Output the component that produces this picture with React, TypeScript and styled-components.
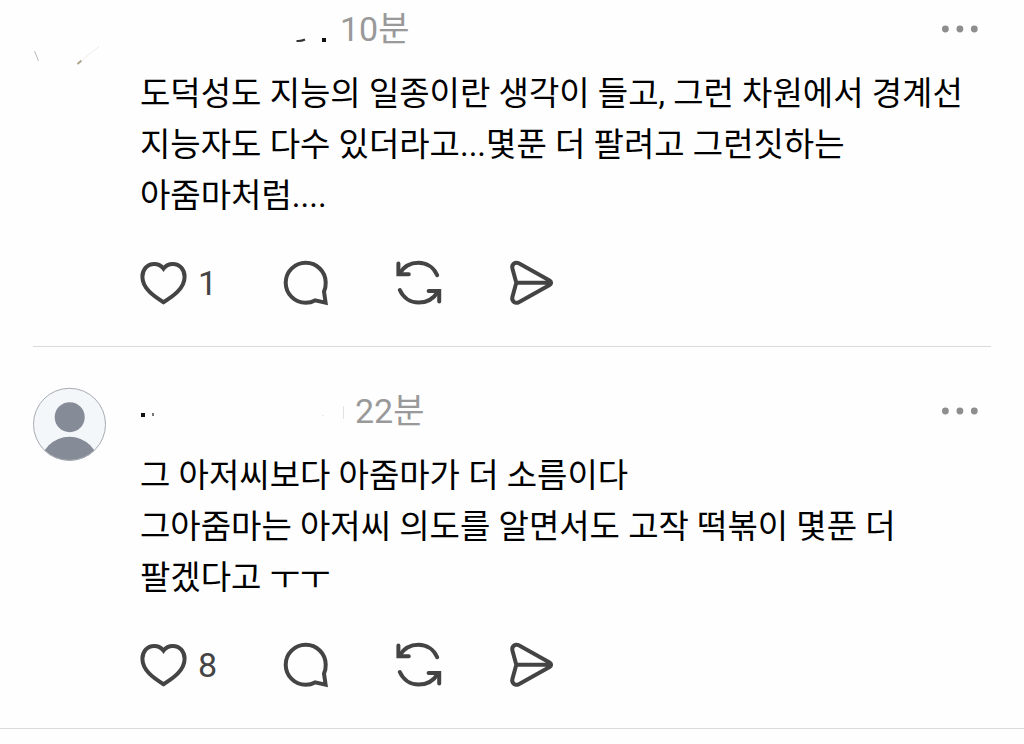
import React from "react";
import styled, { createGlobalStyle } from "styled-components";

const GlobalStyle = createGlobalStyle`
  * { box-sizing: border-box; }
  body {
    margin: 0;
    background: #fefefe;
    color: #000000;
    font-family: Roboto, "Noto Sans CJK KR", sans-serif;
  }
`;

const Feed = styled.main`
  width: 100%;
`;

const Post = styled.article<{ $first?: boolean }>`
  display: flex;
  gap: 33px;
  margin: 0 33px;
  padding: ${(p) => (p.$first ? 5 : 40)}px 0 39px;
`;

const Divider = styled.hr<{ $inset?: boolean }>`
  height: 1px;
  margin: ${(p) => (p.$inset ? "0 33px" : "0")};
  border: 0;
  background: #dadada;
`;

const Avatar = styled.svg`
  flex: none;
  width: 74px;
  height: 75px;
`;

const Content = styled.div`
  flex: 1;
  min-width: 0;
`;

const Header = styled.header`
  display: flex;
  align-items: center;
  gap: 6px;
  height: 48px;
`;

const Name = styled.svg<{ $width: number }>`
  flex: none;
  width: ${(p) => p.$width}px;
  height: 48px;
`;

const Time = styled.time`
  color: #999999;
  font-size: 34px;
  line-height: 48px;
`;

const IconButton = styled.button<{ $width?: number }>`
  display: flex;
  align-items: center;
  gap: 10px;
  width: ${(p) => (p.$width ? `${p.$width}px` : "auto")};
  padding: 0;
  border: 0;
  background: none;
  color: #444444;
  font: inherit;
  font-size: 34px;
  line-height: 48px;
  cursor: pointer;
`;

const MoreButton = styled(IconButton)`
  margin-left: auto;
  margin-right: 12px;
  color: #8e8e8e;
`;

const Body = styled.p`
  margin: 15px 0 38px;
  font-size: 33px;
  line-height: 51px;
  word-break: keep-all;
  white-space: pre-line;
`;

const Actions = styled.div`
  display: flex;
`;

const Glyph = styled.svg`
  flex: none;
  width: 48px;
  height: 48px;
  fill: none;
  stroke: currentColor;
  stroke-width: 4;
  stroke-linejoin: round;
  stroke-linecap: round;
`;

const HeartIcon = () => (
  <Glyph viewBox="0 0 48 48" aria-hidden="true">
    <path
      strokeLinejoin="miter"
      d="M23.5 9.6C21.2 6.6 18 5 14.2 5C7.2 5 2.4 10.6 2.4 17.8C2.4 29.5 14 37.4 23.5 43.2C33 37.4 44.6 29.5 44.6 17.8C44.6 10.6 39.8 5 32.8 5C29 5 25.8 6.6 23.5 9.6Z"
    />
  </Glyph>
);

const CommentIcon = () => (
  <Glyph viewBox="0 0 48 48" aria-hidden="true">
    <path
      strokeLinejoin="miter"
      d="M42 32.6C43.3 29.8 43.8 26.8 43.7 23.6A20 20 0 1 0 23.7 43.7C27.2 43.7 30.3 42.9 33 41.4L43.6 43.6Z"
    />
  </Glyph>
);

const RepostIcon = () => (
  <Glyph viewBox="0 0 48 48" aria-hidden="true">
    <path d="M4.4 14.6C8.6 7.8 15.6 3.8 23.4 3.8C31.8 3.8 38.8 8.6 42.2 16.2M4.8 31C8.2 38.6 15.2 43.6 23.6 43.6C31.6 43.6 38.8 39.4 43 32.6" />
    <path strokeLinejoin="miter" d="M3.4 4.6V15.2H13.8M33.6 32H44.2V42.6" />
  </Glyph>
);

const SendIcon = () => (
  <Glyph viewBox="0 0 48 48" aria-hidden="true">
    <path d="M4.4 9.4C3.4 5.4 7.2 2.4 10.8 4.3L41.6 21.4C43.6 22.6 43.6 24.9 41.6 26.1L10.8 43.2C7.2 45.1 3.4 42.1 4.4 38.1L8.3 23.75ZM8.3 23.75H42" />
  </Glyph>
);

const MoreIcon = () => (
  <svg width="38" height="8" viewBox="0 0 38 8" fill="currentColor" aria-hidden="true">
    <circle cx="4.4" cy="4" r="3.4" />
    <circle cx="18.9" cy="4" r="3.4" />
    <circle cx="33.3" cy="4" r="3.4" />
  </svg>
);

interface PostData {
  id: string;
  avatar: React.ReactNode;
  nameWidth: number;
  name: React.ReactNode;
  time: string;
  text: string;
  likes: number;
}

const posts: PostData[] = [
  {
    id: "first",
    avatar: (
      <>
        <path d="M1.5 46L5.5 56" stroke="#b9b9b9" />
        <path d="M44.5 59L48.5 55.5" stroke="#aaa68f" strokeWidth="2" />
        <path d="M48.5 55.5L66 41.5" stroke="#efebe8" />
      </>
    ),
    nameWidth: 194,
    name: (
      <>
        <path d="M156.5 36Q161 36.5 165 34.5" fill="none" stroke="#333333" strokeWidth="2" />
        <rect x="182" y="33" width="4" height="4" fill="#111111" />
      </>
    ),
    time: "10분",
    text: "도덕성도 지능의 일종이란 생각이 들고, 그런 차원에서 경계선 지능자도 다수 있더라고...몇푼 더 팔려고 그런짓하는 아줌마처럼....",
    likes: 1,
  },
  {
    id: "second",
    avatar: (
      <>
        <defs>
          <clipPath id="avatar-disc">
            <circle cx="36.5" cy="37.3" r="36.5" />
          </clipPath>
        </defs>
        <circle cx="36.5" cy="37.3" r="36.5" fill="#f3f7fa" />
        <g clipPath="url(#avatar-disc)" fill="#868b98">
          <circle cx="36.7" cy="30.2" r="15" />
          <circle cx="36.5" cy="79" r="29.3" />
        </g>
        <circle cx="36.5" cy="37.3" r="36" fill="none" stroke="#a9adb3" />
      </>
    ),
    nameWidth: 209,
    name: (
      <>
        <rect x="1" y="26" width="4" height="4" fill="#111111" />
        <rect x="12" y="26" width="2" height="3" fill="#777777" />
        <rect x="182" y="28" width="2" height="1" fill="#ececec" />
        <rect x="203" y="19" width="1" height="13" fill="#e2e2e2" />
      </>
    ),
    time: "22분",
    text: "그 아저씨보다 아줌마가 더 소름이다\n그아줌마는 아저씨 의도를 알면서도 고작 떡볶이 몇푼 더 팔겠다고 ㅜㅜ",
    likes: 8,
  },
];

export default function App() {
  return (
    <>
      <GlobalStyle />
      <Feed>
        {posts.map((post, i) => (
          <React.Fragment key={post.id}>
            <Post $first={i === 0}>
              <Avatar viewBox="0 0 74 75" aria-hidden="true">
                {post.avatar}
              </Avatar>
              <Content>
                <Header>
                  <Name $width={post.nameWidth} aria-hidden="true">
                    {post.name}
                  </Name>
                  <Time>{post.time}</Time>
                  <MoreButton type="button" aria-label="더 보기">
                    <MoreIcon />
                  </MoreButton>
                </Header>
                <Body>{post.text}</Body>
                <Actions>
                  <IconButton type="button" $width={142} aria-label={`좋아요 ${post.likes}`}>
                    <HeartIcon />
                    <span>{post.likes}</span>
                  </IconButton>
                  <IconButton type="button" $width={113} aria-label="답글">
                    <CommentIcon />
                  </IconButton>
                  <IconButton type="button" $width={113} aria-label="리포스트">
                    <RepostIcon />
                  </IconButton>
                  <IconButton type="button" aria-label="공유">
                    <SendIcon />
                  </IconButton>
                </Actions>
              </Content>
            </Post>
            <Divider $inset={i < posts.length - 1} />
          </React.Fragment>
        ))}
      </Feed>
    </>
  );
}
